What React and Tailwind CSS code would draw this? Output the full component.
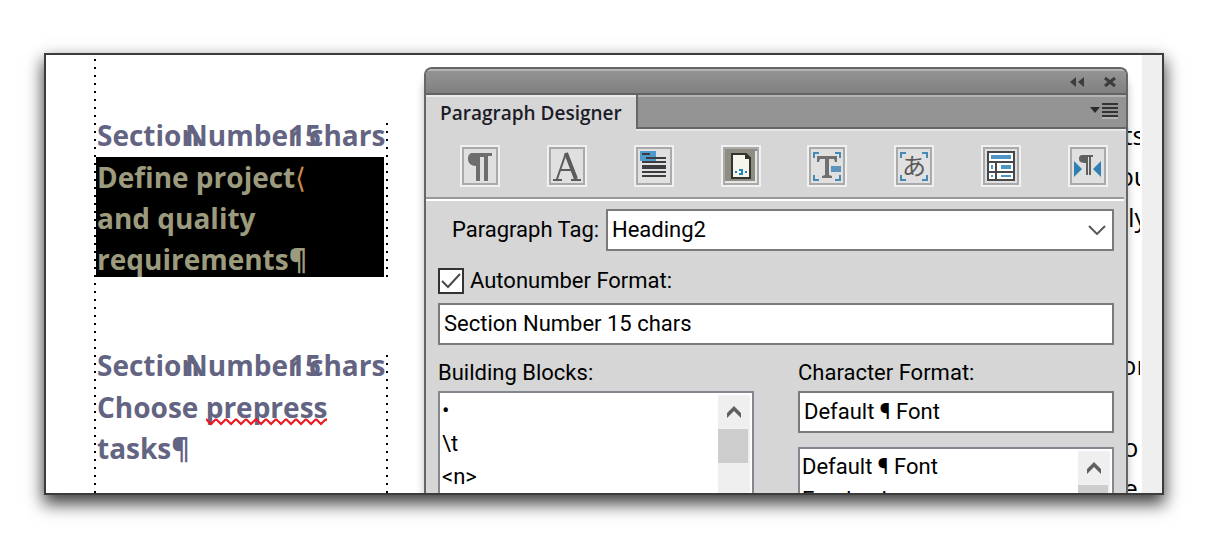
const TOOLS = [
  { label: 'Basic', icon: <BasicIcon /> },
  { label: 'Default Font', icon: <FontIcon /> },
  { label: 'Pagination', icon: <PaginationIcon /> },
  { label: 'Numbering', icon: <NumberingIcon />, active: true },
  { label: 'Advanced', icon: <AdvancedIcon /> },
  { label: 'Asian', icon: <AsianIcon /> },
  { label: 'Table Cell', icon: <TableIcon /> },
  { label: 'Direction', icon: <DirectionIcon /> },
];

function BasicIcon() {
  return (
    <svg viewBox="0 0 32 34" className="w-8 h-[34px]">
      <path d="M8 4H28V7H24V32H20V8H16V32H12V17C7 17 4 14 4 10C4 6 6 4 8 4Z" fill="#6e6e6e" />
    </svg>
  );
}

function FontIcon() {
  return (
    <svg viewBox="0 0 32 34" className="w-8 h-[34px] fill-none stroke-[#5c5c5c]">
      <path d="M6 30L15 4" strokeWidth="2" />
      <path d="M15 4L25 30" strokeWidth="4" />
      <path d="M10 21H22M2 31H11M20 31H30" strokeWidth="2" />
    </svg>
  );
}

function PaginationIcon() {
  return (
    <svg viewBox="0 0 32 34" className="w-8 h-[34px]">
      <path d="M2 2H18V12H2Z" fill="#4f9acb" />
      <path d="M4 4H12V6H4ZM8 8H28V10H8ZM4 12H28V14H4ZM4 16H28V20H4ZM4 22H28V24H4ZM4 26H28V28H4Z" fill="#3c3c40" />
    </svg>
  );
}

function NumberingIcon() {
  return (
    <svg viewBox="0 0 32 34" className="w-8 h-[34px]">
      <path d="M0 0H32V34H0Z" fill="#8f8c84" />
      <path d="M30 2H32V34H0V32H30Z" fill="#e6e6e6" />
      <path d="M7 5H21L25 9V29H7Z" fill="#f5f5ec" stroke="#33332c" strokeWidth="2" />
      <path d="M20 4L26 10H20Z" fill="#33332c" />
      <path d="M10 22H12V24H10ZM14 20H18V26H14V24H16V22H14ZM20 22H22V24H20Z" fill="#1f87bb" />
    </svg>
  );
}

function Corners() {
  return (
    <path d="M3 9V4H8M24 4H29V9M3 26V31H8M24 31H29V26" fill="none" stroke="#4589b5" strokeWidth="2" />
  );
}

function AdvancedIcon() {
  return (
    <svg viewBox="0 0 32 34" className="w-8 h-[34px]">
      <Corners />
      <path d="M6 7H26V13H24L23 10H18V26L21 27V29H11V27L14 26V10H9L8 13H6Z" fill="#707070" />
      <path d="M20 17H30V23H20Z" fill="#5c94bb" />
    </svg>
  );
}

function AsianIcon() {
  return (
    <svg viewBox="0 0 32 34" className="w-8 h-[34px]">
      <Corners />
      <text x="16" y="26" textAnchor="middle" className="fill-[#5a5a5a] text-[24px] font-normal font-['Noto_Sans_CJK_JP',sans-serif]">
        あ
      </text>
    </svg>
  );
}

function TableIcon() {
  return (
    <svg viewBox="0 0 32 34" className="w-8 h-[34px]">
      <path d="M3 3H29V31H3Z" fill="#fff" stroke="#48484a" strokeWidth="2" />
      <path d="M3 13H29M3 23H29M11 13V31" fill="none" stroke="#48484a" strokeWidth="2" />
      <path d="M6 6H26V10H6ZM6 16H8V20H6ZM16 16H26V20H16ZM6 26H8V28H6ZM16 26H26V28H16Z" fill="#4c95c4" />
    </svg>
  );
}

function DirectionIcon() {
  return (
    <svg viewBox="0 0 32 34" className="w-8 h-[34px]">
      <path d="M2 12L10 20L2 28ZM29 12L21 20L29 28Z" fill="#2f80b3" />
      <path d="M10 6H21V8H19V26H17V8H16V26H14V14C10 14 7 13 7 10C7 7 8 6 10 6Z" fill="#606060" />
    </svg>
  );
}

function Dots() {
  return (
    <div className="w-0.5 self-stretch shrink-0 bg-[repeating-linear-gradient(to_bottom,#000_0px,#000_2px,transparent_2px,transparent_8px)]" />
  );
}

function Autonumber() {
  return (
    <p className="flex h-[42px] pl-px">
      <span className="w-[88px]">Section</span>
      <span className="w-[104px]">Number</span>
      <span className="w-5">15</span>
      <span>chars</span>
    </p>
  );
}

function DocumentText() {
  return (
    <div className="w-[378px] shrink-0 pt-1 pl-12 flex font-['Open_Sans',sans-serif] font-bold text-[28px] leading-[41px] whitespace-nowrap text-[#636482]">
      <Dots />
      <div className="w-[292px] pt-16">
        <div className="flex justify-between h-[154px]">
          <div className="w-[288px] -mt-2">
            <Autonumber />
            <p className="h-[120px] flex items-center bg-black text-[#9c9b7d]">
              <span className="pl-px pt-0.5">
                Define project<span className="font-normal text-[#c98a4a]">⟨</span>
                <br />
                and quality
                <br />
                requirements¶
              </span>
            </p>
          </div>
          <Dots />
        </div>
        <div className="flex justify-between mt-[78px] h-[138px]">
          <div className="w-[288px] -mt-2.5">
            <Autonumber />
            <p className="pl-px">
              Choose{' '}
              <span className="relative">
                prepress
                <svg className="absolute left-0 bottom-0 w-full h-2" aria-hidden="true">
                  <defs>
                    <pattern id="squiggle" width="10" height="8" patternUnits="userSpaceOnUse">
                      <path d="M0 1L5 6L10 1" fill="none" stroke="#f0141e" strokeWidth="2" />
                    </pattern>
                  </defs>
                  <rect width="100%" height="8" fill="url(#squiggle)" />
                </svg>
              </span>
              <br />
              tasks¶
            </p>
          </div>
          <Dots />
        </div>
      </div>
    </div>
  );
}

// the page text that still shows between the panel and the window's scroll bar
function PageEdge() {
  return (
    <div className="w-3 mr-0.5 shrink-0 overflow-hidden pt-[60px] font-['Open_Sans',sans-serif] text-[26px] leading-[41px] text-black">
      <div className="h-[230px]">
        <p className="flex justify-center">ts</p>
        <p className="flex justify-center">ou</p>
        <p className="flex">ly</p>
      </div>
      <div className="h-[148px] overflow-hidden">
        <p className="flex justify-center">or</p>
        <p className="h-[41px]" />
        <p className="flex justify-center">o&nbsp;</p>
        <p className="flex justify-center">e,</p>
      </div>
    </div>
  );
}

function ScrollBar() {
  return (
    <div className="w-8 mt-0.5 mr-0.5 shrink-0 bg-[#efefef]">
      <button type="button" aria-label="Scroll up" className="flex w-full h-[34px] items-center justify-center">
        <svg viewBox="0 0 14 12" className="w-3.5 h-3">
          <path d="M0 12V7L7 0L14 7V12L7 5Z" fill="#606060" />
        </svg>
      </button>
      <div className="w-[30px] h-[34px] bg-[#cdcdcd]" />
    </div>
  );
}

function ListBox({ items, className }) {
  return (
    <div className={`flex overflow-hidden border-2 border-b-0 border-[#828790] bg-white ${className}`}>
      <ul className="flex-1 pl-0.5 pt-px leading-[33px]">
        {items.map((item) => (
          <li key={item}>{item}</li>
        ))}
      </ul>
      <ScrollBar />
    </div>
  );
}

function Panel() {
  return (
    <section className="flex-1 min-w-0 mt-3 flex flex-col overflow-hidden rounded-t-lg border-2 border-b-0 border-[#666] bg-[#d6d6d6] shadow-[0_12px_8px_rgba(0,0,0,0.25)] text-[22px] leading-7 text-black font-['Roboto',sans-serif]">
      <header className="h-[26px] flex items-center justify-end gap-5 pr-2.5 border-t-2 border-b-2 border-t-[#b4b4b4] border-b-[#636363] bg-linear-to-b from-[#949494] to-[#808080]">
        <button type="button" aria-label="Collapse">
          <svg viewBox="0 0 14 12" className="w-3.5 h-3">
            <path d="M6 1V11L0 6ZM14 1V11L8 6Z" fill="#3c3c3c" />
          </svg>
        </button>
        <button type="button" aria-label="Close">
          <svg viewBox="0 0 12 12" className="w-3 h-3">
            <path d="M1 2L11 10M11 2L1 10" stroke="#3c3c3c" strokeWidth="3" />
          </svg>
        </button>
      </header>

      <div className="h-9 flex">
        <h1 className="w-[210px] shrink-0 pl-3.5 border-t-2 border-[#ececec] font-['Open_Sans',sans-serif] font-semibold text-[19px] leading-8 text-[#1c1c28]">
          Paragraph Designer
        </h1>
        <div className="flex-1 h-[34px] flex items-center justify-end pr-2 border-l-2 border-b-2 border-[#666] bg-[#949494] shadow-[inset_0_2px_#b4b4b4,0_2px_#e8e8e8]">
          <button type="button" aria-label="Panel menu">
            <svg viewBox="0 0 28 16" className="w-7 h-4">
              <path d="M0 4H10L5 10Z" fill="#2c2c2c" />
              <path d="M12 0H28V2H12ZM12 4H28V6H12ZM12 8H28V10H12ZM12 12H28V14H12Z" fill="#333" />
              <path d="M12 14H28V16H12Z" fill="#b4b4b4" />
            </svg>
          </button>
        </div>
      </div>

      <div className="flex justify-between pt-3.5 pb-2.5 pl-[34px] pr-4 mr-0.5 border-b-2 border-[#999] shadow-[0_2px_#fff]">
        {TOOLS.map(({ label, icon, active }) => (
          <button
            key={label}
            type="button"
            aria-label={label}
            aria-pressed={!!active}
            className="w-10 h-[42px] border-2 border-[#f0f0f0] bg-[#e0e0e0] shadow-[inset_0_0_0_2px_#aaa]"
          >
            <span className="block m-0.5 w-8 h-[34px]">{icon}</span>
          </button>
        ))}
      </div>

      <div className="pl-3 pr-3 pt-2.5">
        <div className="flex items-center">
          <label htmlFor="tag" className="w-[168px] pl-3.5">Paragraph Tag:</label>
          <div className="relative flex-1">
            <select id="tag" className="block w-full h-[42px] pl-1 appearance-none border-2 border-[#7a7a7a] bg-white">
              <option>Heading2</option>
            </select>
            <svg viewBox="0 0 18 10" className="absolute right-2 top-4 w-[18px] h-2.5 pointer-events-none">
              <path d="M1 1L9 9L17 1" fill="none" stroke="#5a5a5a" strokeWidth="2" />
            </svg>
          </div>
        </div>

        <div className="flex items-center gap-1.5 mt-4">
          <span className="relative w-[26px] h-[26px]">
            <input id="auto" type="checkbox" defaultChecked className="block w-full h-full appearance-none border-2 border-[#333] bg-white" />
            <svg viewBox="0 0 26 26" className="absolute inset-0 w-[26px] h-[26px] pointer-events-none">
              <path d="M4 13L10 19L22 6" fill="none" stroke="#4a4a4a" strokeWidth="2" />
            </svg>
          </span>
          <label htmlFor="auto">Autonumber Format:</label>
        </div>

        <input
          type="text"
          aria-label="Autonumber format"
          defaultValue="Section Number 15 chars"
          className="block w-full h-[42px] mt-2 pl-1 pb-0.5 border-2 border-[#7a7a7a] bg-white"
        />

        <div className="flex gap-11 mt-3.5">
          <div className="flex-1">
            <h2 className="h-8">Building Blocks:</h2>
            <ListBox items={['•', '\\t', '<n>']} className="h-[102px]" />
          </div>
          <div className="flex-1">
            <label htmlFor="char" className="block h-8">Character Format:</label>
            <input
              id="char"
              type="text"
              defaultValue="Default ¶ Font"
              className="block w-full h-[42px] mb-3.5 pl-1 pb-0.5 border-2 border-[#7a7a7a] bg-white"
            />
            <ListBox items={['Default ¶ Font', 'Emphasis']} className="h-[46px]" />
          </div>
        </div>
      </div>
    </section>
  );
}

export default function App() {
  return (
    <main className="min-h-screen bg-white px-11 pt-[53px] pb-[52px]">
      <div className="flex overflow-hidden border-2 border-[#3c3c3c] bg-white shadow-[0_8px_16px_1px_rgba(0,0,0,0.75)]">
        <DocumentText />
        <Panel />
        <PageEdge />
        <div className="w-5 shrink-0 bg-[#efefef]" />
      </div>
    </main>
  );
}
